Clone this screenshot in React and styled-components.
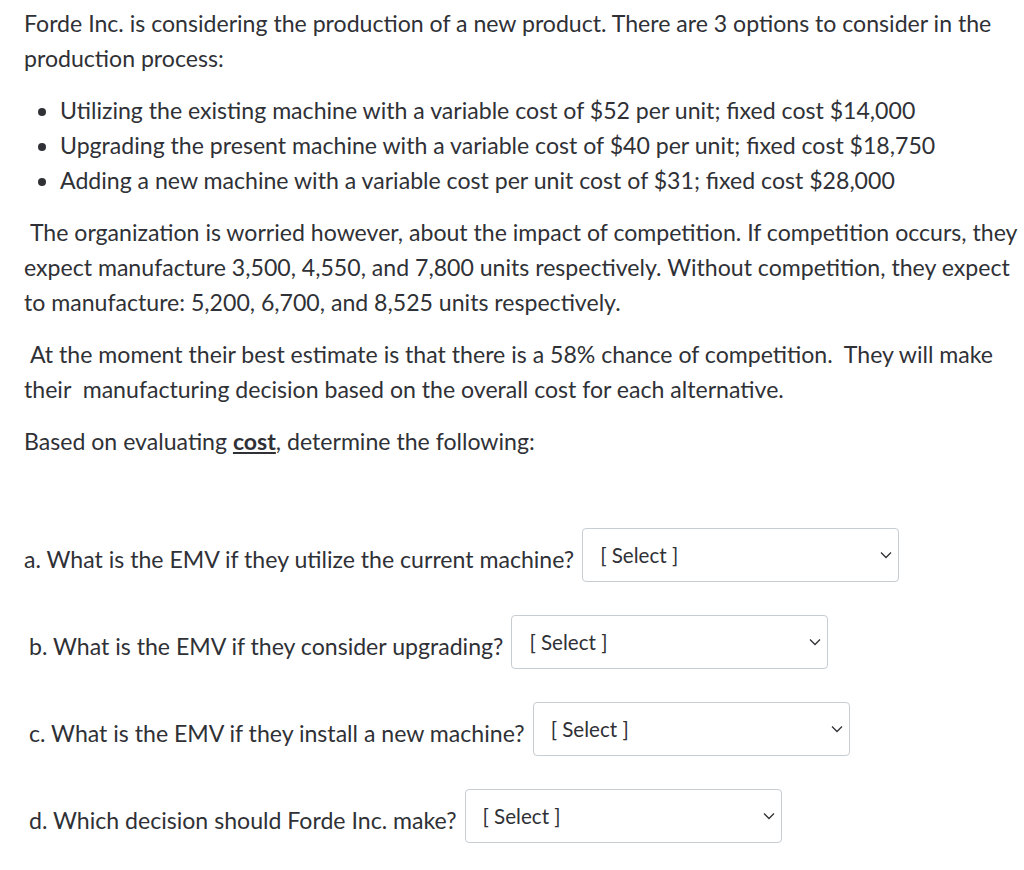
import React from "react";
import styled, { createGlobalStyle } from "styled-components";

const GlobalStyle = createGlobalStyle`
  html, body {
    margin: 0;
    padding: 0;
    background: #ffffff;
  }
  body {
    font-family: Lato, "Open Sans", sans-serif;
    color: #2f3136;
  }
`;

const Page = styled.div`
  padding: 6px 0 0 24px;
  font-size: 23.1px;
  line-height: 35px;
  color: #2f3136;
`;

const Para = styled.p`
  margin: 0 0 17px 0;
  white-space: pre-wrap;
`;

const Bullets = styled.ul`
  margin: 17px 0 17px 0;
  padding-left: 36px;
  li {
    margin: 0;
  }
`;

const Strong = styled.strong`
  font-weight: 700;
  text-decoration: underline;
`;

const Questions = styled.div`
  display: flex;
  flex-direction: column;
  gap: 33px;
  margin-top: 69px;
`;

const Question = styled.div`
  display: flex;
  align-items: center;
  gap: 8px;
  height: 54px;
  padding-left: ${(p) => p.$indent || 0}px;
`;

const Label = styled.span`
  padding-top: 8px;
`;

const SelectBox = styled.div`
  box-sizing: border-box;
  width: 317px;
  height: 54px;
  border: 1px solid #c7cdd1;
  border-radius: 4px;
  display: flex;
  align-items: center;
  justify-content: space-between;
  padding: 0 6px 0 17px;
  font-size: 20.6px;
  background: #fff;
`;

const Chevron = () => (
  <svg width="12" height="8" viewBox="0 0 12 8" fill="none">
    <path d="M1 1.5 L6 6.5 L11 1.5" stroke="#2f3136" strokeWidth="1.3" />
  </svg>
);

const questions = [
  { text: "a. What is the EMV if they utilize the current machine?", indent: 0 },
  { text: "b. What is the EMV if they consider upgrading?", indent: 5 },
  { text: "c. What is the EMV if they install a new machine?", indent: 5 },
  { text: "d. Which decision should Forde Inc. make?", indent: 5 },
];

export default function App() {
  return (
    <Page>
      <GlobalStyle />
      <Para>
        Forde Inc. is considering the production of a new product. There are 3
        options to consider in the production process:
      </Para>
      <Bullets>
        <li>Utilizing the existing machine with a variable cost of $52 per unit; fixed cost $14,000</li>
        <li>Upgrading the present machine with a variable cost of $40 per unit; fixed cost $18,750</li>
        <li>Adding a new machine with a variable cost per unit cost of $31; fixed cost $28,000</li>
      </Bullets>
      <Para>
        {" The organization is worried however, about the impact of competition. If competition occurs, they expect manufacture 3,500, 4,550, and 7,800 units respectively. Without competition, they expect to manufacture: 5,200, 6,700, and 8,525 units respectively."}
      </Para>
      <Para>
        {" At the moment their best estimate is that there is a 58% chance of competition.  They will make their  manufacturing decision based on the overall cost for each alternative."}
      </Para>
      <Para>
        Based on evaluating <Strong>cost</Strong>, determine the following:
      </Para>
      <Questions>
        {questions.map((q) => (
          <Question key={q.text} $indent={q.indent}>
            <Label>{q.text}</Label>
            <SelectBox>
              <span>[ Select ]</span>
              <Chevron />
            </SelectBox>
          </Question>
        ))}
      </Questions>
    </Page>
  );
}
